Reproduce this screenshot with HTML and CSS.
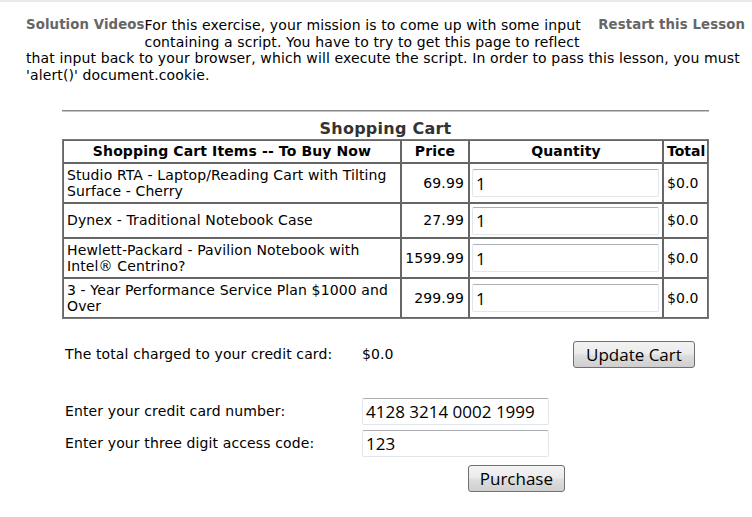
FILE: index.html
```html
<!DOCTYPE html>
<html lang="en">
<head>
<meta charset="utf-8">
<title>Shopping Cart</title>
<link rel="stylesheet" href="styles.css">
</head>
<body>
<div class="page">
  <div class="lesson-head">
    <a class="nav-link nav-left" href="#">Solution Videos</a>
    <a class="nav-link nav-right" href="#">Restart this Lesson</a>
    <p class="instructions">For this exercise, your mission is to come up with some input containing a script. You have to try to get this page to reflect that input back to your browser, which will execute the script. In order to pass this lesson, you must 'alert()' document.cookie.</p>
  </div>

  <hr class="divider">

  <table class="cart">
    <caption>Shopping Cart</caption>
    <thead>
      <tr>
        <th class="c-item">Shopping Cart Items -- To Buy Now</th>
        <th class="c-price">Price</th>
        <th class="c-qty">Quantity</th>
        <th class="c-total">Total</th>
      </tr>
    </thead>
    <tbody>
      <tr>
        <td class="item">Studio RTA - Laptop/Reading Cart with Tilting Surface - Cherry</td>
        <td class="price">69.99</td>
        <td class="qty"><input class="field" type="text" value="1"></td>
        <td class="total">$0.0</td>
      </tr>
      <tr>
        <td class="item">Dynex - Traditional Notebook Case</td>
        <td class="price">27.99</td>
        <td class="qty"><input class="field" type="text" value="1"></td>
        <td class="total">$0.0</td>
      </tr>
      <tr>
        <td class="item">Hewlett-Packard - Pavilion Notebook with Intel® Centrino?</td>
        <td class="price">1599.99</td>
        <td class="qty"><input class="field" type="text" value="1"></td>
        <td class="total">$0.0</td>
      </tr>
      <tr>
        <td class="item">3 - Year Performance Service Plan $1000 and Over</td>
        <td class="price">299.99</td>
        <td class="qty"><input class="field" type="text" value="1"></td>
        <td class="total">$0.0</td>
      </tr>
    </tbody>
  </table>

  <div class="checkout">
    <div class="line line-total">
      <span class="label">The total charged to your credit card:</span>
      <span class="value">$0.0</span>
      <button class="btn" type="button">Update Cart</button>
    </div>
    <div class="line line-card">
      <label class="label">Enter your credit card number:</label>
      <span class="value"><input class="field" type="text" value="4128 3214 0002 1999"></span>
    </div>
    <div class="line line-code">
      <label class="label">Enter your three digit access code:</label>
      <span class="value"><input class="field" type="text" value="123"></span>
    </div>
    <div class="line line-buy">
      <button class="btn btn-purchase" type="button">Purchase</button>
    </div>
  </div>
</div>
</body>
</html>
```

FILE: styles.css
```css
html, body {
  margin: 0;
  padding: 0;
  background: #fff;
}

body {
  border-top: 2px solid #ebebeb;
  font-family: "DejaVu Sans", Verdana, sans-serif;
  font-size: 14px;
  letter-spacing: 0.12px;
  color: #000;
}

.page {
  padding: 15px 7px 0 26px;
}

.lesson-head {
  line-height: 16.7px;
}

.nav-link {
  font-size: 13.3px;
  letter-spacing: 0.1px;
  font-weight: bold;
  color: #666;
  text-decoration: none;
  height: 33px;
}

.nav-left {
  float: left;
}

.nav-right {
  float: right;
  padding-left: 12px;
}

.instructions {
  margin: 0;
}

.divider {
  width: 647px;
  height: 0;
  margin: 26px auto 0;
  border: 0;
  border-top: 1px solid #888;
  border-bottom: 1px solid #c4c4c4;
}

.cart {
  width: 647px;
  margin: 0 auto;
  table-layout: fixed;
  border-collapse: separate;
  border-spacing: 0;
  border: 1px solid #7a7a7a;
  line-height: 16px;
}

.cart caption {
  padding: 8px 0 1px;
  font-size: 16px;
  line-height: 18px;
  letter-spacing: 0.25px;
  font-weight: bold;
  color: #333;
}

.cart th,
.cart td {
  box-sizing: border-box;
  border: 1px solid #666;
  padding: 3px 3px;
  vertical-align: middle;
}

.cart th {
  padding: 2px 3px;
  line-height: 17px;
  font-weight: bold;
  text-align: center;
}

.c-item { width: 338px; }
.c-price { width: 68px; }
.c-qty { width: 194px; }
.c-total { width: 45px; }

.cart th.c-total {
  text-align: left;
  padding-left: 3px;
  padding-right: 0;
  letter-spacing: 0;
}

.item {
  text-align: left;
}

.cart td.price {
  text-align: right;
  padding-right: 4px;
}

.cart td.qty {
  padding: 3px 2px 2px;
}

.total {
  text-align: left;
}

.field {
  display: block;
  box-sizing: border-box;
  width: 187px;
  height: 28px;
  margin: 0;
  padding: 0 3px;
  border: 1px solid #e1e6ec;
  border-top-color: #acaeb4;
  border-radius: 2px;
  background: #fff;
  font-family: "Open Sans", "Liberation Sans", sans-serif;
  font-size: 17px;
  letter-spacing: 0;
  color: #000;
}

.checkout {
  margin: 22px 0 0 36px;
}

.line {
  display: grid;
  grid-template-columns: 296px 211px auto;
  align-items: center;
  height: 27px;
}

.line-card {
  margin-top: 30px;
}

.line-code {
  margin-top: 5px;
}

.line-buy {
  margin-top: 8px;
}

.label {
  padding-left: 3px;
}

.value {
  padding-left: 4px;
}

.line .field {
  height: 27px;
}

.btn {
  box-sizing: border-box;
  height: 27px;
  margin: 0 0 0 4px;
  padding: 0 12px;
  justify-self: start;
  border: 1px solid #707070;
  border-radius: 3px;
  background: linear-gradient(#f3f3f3 0%, #ebebeb 45%, #dddddd 55%, #cfcfcf 100%);
  font-family: "Open Sans", "Liberation Sans", sans-serif;
  font-size: 17px;
  line-height: 23px;
  letter-spacing: 0;
  color: #000;
}

.btn-purchase {
  grid-column: 2;
  justify-self: end;
  margin: 0 4px 0 0;
  padding: 0 11px;
}
```
